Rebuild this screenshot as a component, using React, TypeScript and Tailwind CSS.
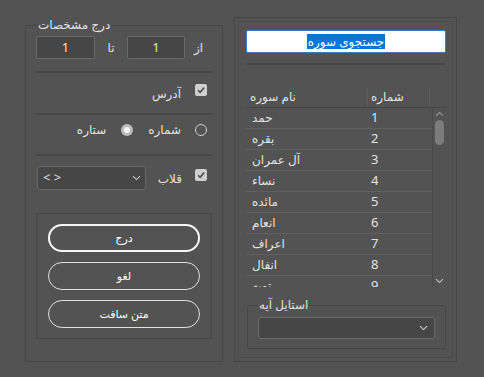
import React from "react";

const Chevron = ({ className = "" }: { className?: string }) => (
  <svg width="9" height="6" viewBox="0 0 9 6" className={className}>
    <path d="M1 1.2 L4.5 4.6 L8 1.2" fill="none" stroke="#c8c8c8" strokeWidth="1.1" />
  </svg>
);

const ChevronUp = () => (
  <svg width="9" height="6" viewBox="0 0 9 6">
    <path d="M1 4.8 L4.5 1.4 L8 4.8" fill="none" stroke="#9a9a9a" strokeWidth="1.1" />
  </svg>
);

const CheckBox = () => (
  <div className="w-[12px] h-[12px] bg-[#cfcfcf] rounded-[2px] flex items-center justify-center">
    <svg width="10" height="10" viewBox="0 0 10 10">
      <path d="M2 5.2 L4.1 7.3 L8.2 2.6" fill="none" stroke="#4f4f4f" strokeWidth="1.6" />
    </svg>
  </div>
);

const Sep = ({ className = "" }: { className?: string }) => (
  <div className={"h-[2px] bg-[#484848] " + className} />
);

const surahs = ["حمد", "بقره", "آل عمران", "نساء", "مائده", "انعام", "اعراف", "انفال", "توبه"];

export default function App() {
  return (
    <div className="w-[484px] h-[377px] bg-[#535353] flex items-start overflow-hidden text-[12px] text-[#e2e2e2] font-['Noto_Sans','DejaVu_Sans',sans-serif]">
      {/* Left panel */}
      <div className="relative mt-[25px] ml-[25px] w-[198px] h-[337px] border border-[#474747] rounded-[2px] px-[10px] pt-[10px] flex flex-col">
        <span className="absolute left-[11px] -top-[8px] px-[1px] bg-[#535353] leading-[14px]">درج مشخصات</span>

        <div className="flex items-center h-[23px]">
          <div className="w-[59px] h-[23px] bg-[#464646] border border-[#6a6a6a] rounded-[2px] flex items-center justify-center text-[13px]">1</div>
          <div className="w-[32px] text-center">تا</div>
          <div className="w-[58px] h-[23px] bg-[#464646] border border-[#6a6a6a] rounded-[2px] flex items-center justify-center text-[13px]">1</div>
          <div className="w-[27px] text-center">از</div>
        </div>

        <Sep className="mt-[12px]" />

        <div className="mt-[11px] h-[18px] flex justify-end items-start pr-[5px]">
          <span className="mt-[3px] leading-[14px]">آدرس</span>
          <div className="ml-[14px]"><CheckBox /></div>
        </div>

        <Sep className="mt-[11px]" />

        <div className="mt-[9px] h-[12px] flex justify-end items-center pr-[5px]">
          <span className="leading-[14px]">ستاره</span>
          <div className="ml-[15px] w-[12px] h-[12px] rounded-full bg-[#bdbdbd] flex items-center justify-center">
            <div className="w-[6px] h-[6px] rounded-full bg-[#f4f4f4]" />
          </div>
          <span className="ml-[15px] leading-[14px]">شماره</span>
          <div className="ml-[14px] w-[12px] h-[12px] rounded-full border border-[#cfcfcf]" />
        </div>

        <Sep className="mt-[18px]" />

        <div className="mt-[10px] h-[24px] flex items-start pr-[5px]">
          <div className="ml-[1px] w-[109px] h-[24px] bg-[#464646] border border-[#6a6a6a] rounded-[3px] flex items-center justify-between pl-[5px] pr-[4px] text-[13px]">
            <span>&lt; &gt;</span>
            <Chevron />
          </div>
          <div className="flex-1" />
          <span className="mt-[6px] leading-[14px]">قلاب</span>
          <div className="ml-[13px] mt-[3px]"><CheckBox /></div>
        </div>

        <div className="mt-[23px] w-[176px] border border-[#474747] rounded-[2px] px-[11px] py-[10px] flex flex-col gap-[10px]">
          <div className="h-[28px] rounded-full border-2 border-[#f6f6f6] flex items-center justify-center text-[11px] text-white">درج</div>
          <div className="h-[28px] rounded-full border-[1.5px] border-[#e0e0e0] flex items-center justify-center text-[11px] text-white">لغو</div>
          <div className="h-[28px] rounded-full border-[1.5px] border-[#e0e0e0] flex items-center justify-center text-[11px] text-white">متن سافت</div>
        </div>
      </div>

      {/* Right panel */}
      <div className="mt-[17px] ml-[11px] w-[223px] h-[345px] border border-[#474747] p-[3px]">
        <div className="w-full h-full border border-[#4b4b4b] pl-[7px] pr-[6px] pt-[8px] flex flex-col">
          <div className="h-[23px] bg-white border border-[#3d7ab8] rounded-[2px] flex items-center justify-center">
            <span className="bg-[#0078d7] text-white leading-[15px] px-[1px]">جستجوی سوره</span>
          </div>

          <Sep className="mt-[10px]" />

          <div className="mt-[22px] h-[20px] flex items-center">
            <div className="w-[121px] h-full flex items-center pl-[4px]">نام سوره</div>
            <div className="w-[1px] h-[18px] bg-[#5f5f5f]" />
            <div className="w-[61px] h-full flex items-center pl-[3px]">شماره</div>
            <div className="w-[1px] h-[18px] bg-[#5f5f5f]" />
          </div>

          <div className="h-[180px] border-t border-[#474747] flex overflow-hidden">
            <div className="w-[186px] flex flex-col">
              {surahs.map((s, i) => (
                <div key={i} className="h-[21px] shrink-0 border-b border-[#606060] flex items-center">
                  <div className="w-[120px] pl-[6px]">{s}</div>
                  <div className="pl-[5px] text-[13px]">{i + 1}</div>
                </div>
              ))}
            </div>
            <div className="w-[14px] flex flex-col items-center border-l border-[#4a4a4a]">
              <div className="mt-[3px]"><ChevronUp /></div>
              <div className="mt-[3px] w-[9px] h-[25px] rounded-full bg-[#7c7c7c]" />
              <div className="flex-1" />
              <div className="mb-[3px]"><Chevron /></div>
            </div>
          </div>

          <div className="relative mt-[18px] ml-[1px] w-[199px] h-[44px] border border-[#474747] rounded-[2px] px-[10px] pt-[11px]">
            <span className="absolute left-[10px] -top-[8px] px-[1px] bg-[#535353] leading-[14px]">استایل آیه</span>
            <div className="h-[22px] bg-[#464646] border border-[#6a6a6a] rounded-[3px] flex items-center justify-end pr-[6px]">
              <Chevron />
            </div>
          </div>
        </div>
      </div>
    </div>
  );
}
